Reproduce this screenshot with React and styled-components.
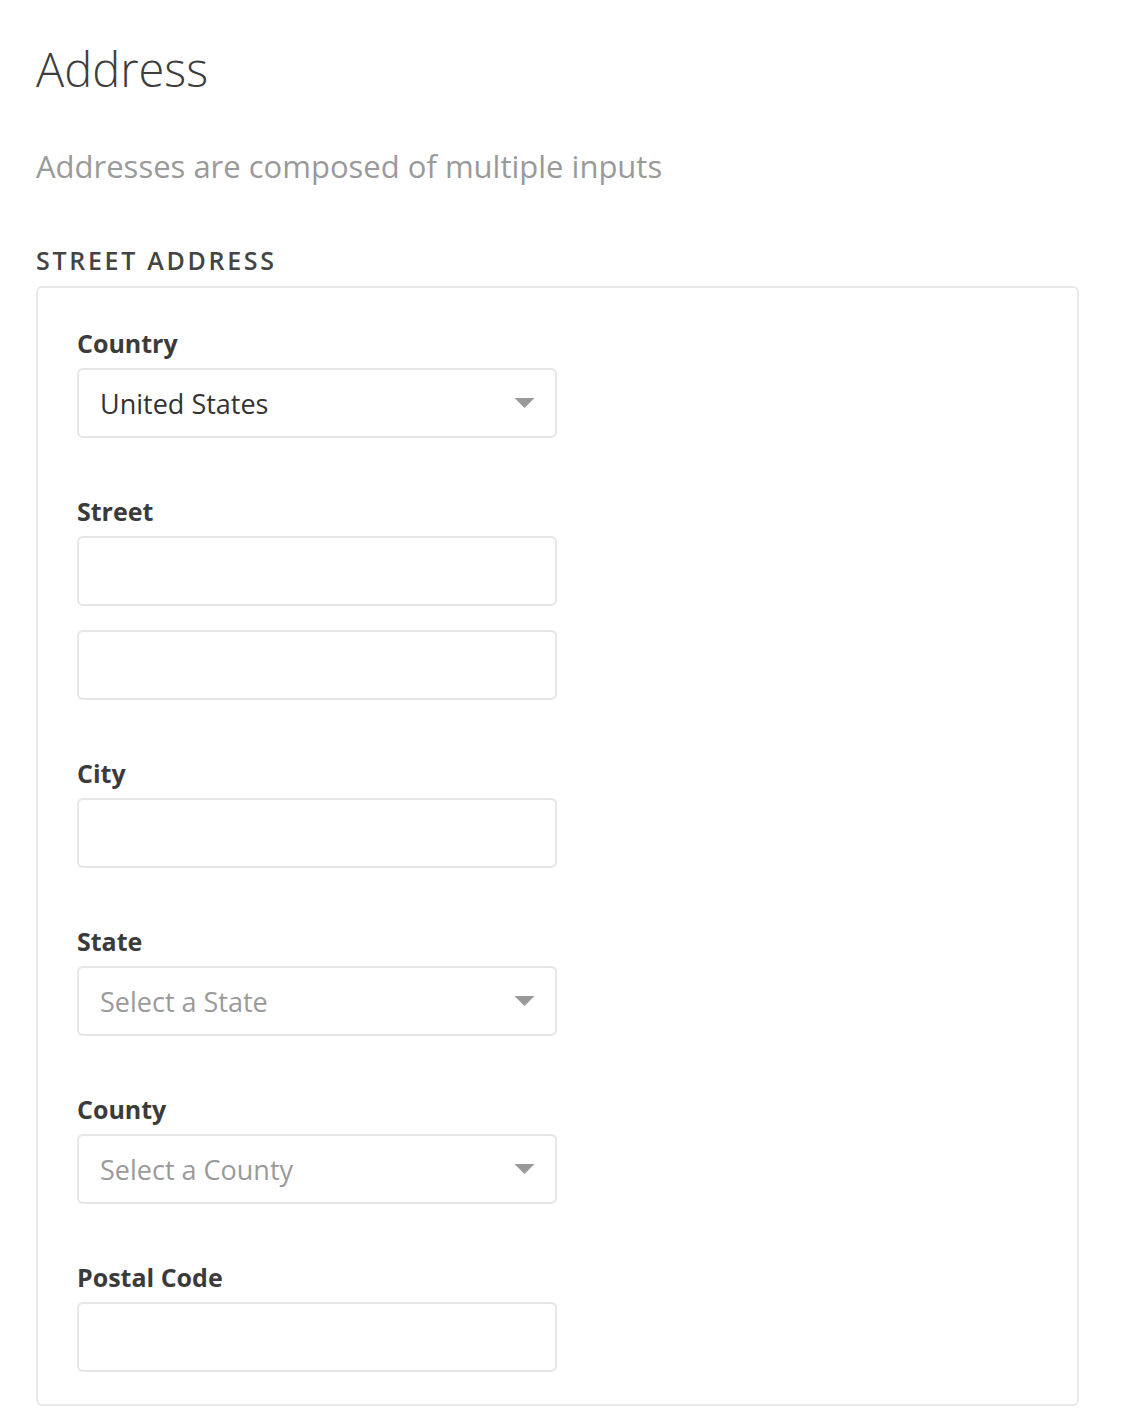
import React from 'react'
import styled, { createGlobalStyle } from 'styled-components'

const GlobalStyle = createGlobalStyle`
  body {
    margin: 0;
    background: #fff;
    font-family: "Open Sans", "Noto Sans", sans-serif;
    color: #3b3b3b;
  }
`

const fields = [
  { label: 'Country', kind: 'select', value: 'United States' },
  { label: 'Street', kind: 'text', count: 2 },
  { label: 'City', kind: 'text' },
  { label: 'State', kind: 'select', placeholder: 'Select a State' },
  { label: 'County', kind: 'select', placeholder: 'Select a County' },
  { label: 'Postal Code', kind: 'text' },
]

export default function App() {
  return (
    <Page>
      <GlobalStyle />
      <Title>Address</Title>
      <Subtitle>Addresses are composed of multiple inputs</Subtitle>
      <SectionLabel>Street Address</SectionLabel>
      <Panel>
        {fields.map((f) => (
          <Field key={f.label}>
            <Label>{f.label}</Label>
            {f.kind === 'select' ? (
              <SelectBox>
                <SelectText $placeholder={!f.value}>{f.value || f.placeholder}</SelectText>
                <Caret viewBox="0 0 20 10" aria-hidden="true">
                  <path d="M0 0h20L10 10z" fill="#999" />
                </Caret>
              </SelectBox>
            ) : (
              <Inputs>
                {Array.from({ length: f.count || 1 }).map((_, i) => (
                  <TextInput key={i} type="text" />
                ))}
              </Inputs>
            )}
          </Field>
        ))}
      </Panel>
    </Page>
  )
}

const Page = styled.div`
  padding: 36px 36px 14px 36px;
  width: 1043px;
`

const Title = styled.h1`
  margin: 0;
  font-size: 47px;
  font-weight: 300;
  line-height: 66px;
  color: #3d3d3d;
`

const Subtitle = styled.p`
  margin: 44px 0 0;
  font-size: 31px;
  line-height: 40px;
  color: #9a9a9a;
`

const SectionLabel = styled.div`
  margin-top: 58px;
  font-size: 25px;
  font-weight: 600;
  line-height: 32px;
  letter-spacing: 2.7px;
  text-transform: uppercase;
  color: #444;
`

const Panel = styled.div`
  margin-top: 10px;
  border: 2px solid #e8e8e8;
  border-radius: 6px;
  padding: 39px 40px 32px 39px;
  display: flex;
  flex-direction: column;
  gap: 57px;
`

const Field = styled.div`
  display: flex;
  flex-direction: column;
  gap: 9px;
`

const Label = styled.label`
  font-size: 25px;
  font-weight: 700;
  line-height: 32px;
  color: #3b3b3b;
`

const Inputs = styled.div`
  display: flex;
  flex-direction: column;
  gap: 24px;
`

const boxCss = `
  box-sizing: border-box;
  width: 480px;
  height: 70px;
  border: 2px solid #e6e6e6;
  border-radius: 6px;
  background: #fff;
`

const TextInput = styled.input`
  ${boxCss}
  padding: 0 20px;
  font: inherit;
  font-size: 27px;
  outline: none;
`

const SelectBox = styled.div`
  ${boxCss}
  display: flex;
  align-items: center;
  justify-content: space-between;
  padding: 0 20px 0 21px;
`

const SelectText = styled.span`
  font-size: 27px;
  color: ${(p) => (p.$placeholder ? '#9a9a9a' : '#333')};
`

const Caret = styled.svg`
  width: 21px;
  height: 10px;
`
